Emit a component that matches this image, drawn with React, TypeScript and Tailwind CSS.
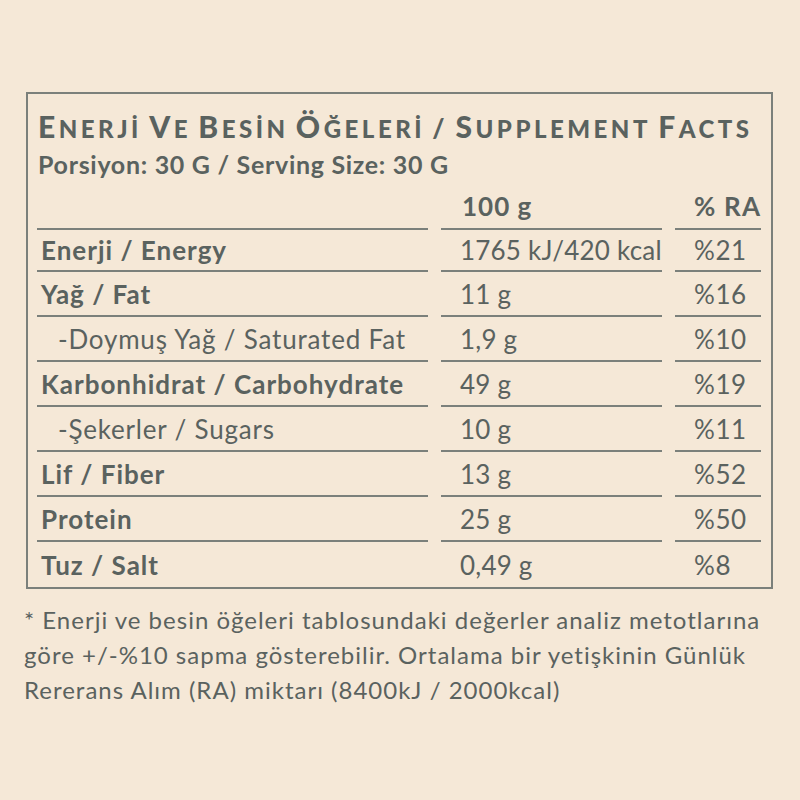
import React from "react";

const rows: { label: string; bold: boolean; v: string; ra: string }[] = [
  { label: "Enerji / Energy", bold: true, v: "1765 kJ/420 kcal", ra: "%21" },
  { label: "Yağ / Fat", bold: true, v: "11 g", ra: "%16" },
  { label: "-Doymuş Yağ / Saturated Fat", bold: false, v: "1,9 g", ra: "%10" },
  { label: "Karbonhidrat / Carbohydrate", bold: true, v: "49 g", ra: "%19" },
  { label: "-Şekerler / Sugars", bold: false, v: "10 g", ra: "%11" },
  { label: "Lif / Fiber", bold: true, v: "13 g", ra: "%52" },
  { label: "Protein", bold: true, v: "25 g", ra: "%50" },
  { label: "Tuz / Salt", bold: true, v: "0,49 g", ra: "%8" },
];

function Word({ first, rest }: { first: string; rest: string }) {
  return (
    <span>
      <span className="text-[30px]">{first}</span>
      <span className="text-[24px]">{rest}</span>
    </span>
  );
}

export default function App() {
  return (
    <div
      className="w-[800px] h-[800px] bg-[#f5e8d7] text-[#5a625f] pt-[92px] pl-[26px]"
      style={{ fontFamily: "Lato, 'Noto Sans', sans-serif" }}
    >
      <div className="w-[747px] border-2 border-[#7b807b] pl-[9px] pr-[10px] pt-[17px]">
        <div className="h-[30px] leading-[30px] font-black whitespace-nowrap tracking-[3.5px] pl-[1px]">
          <Word first="E" rest="NERJİ" /> <Word first="V" rest="E" /> <Word first="B" rest="ESİN" />{" "}
          <Word first="Ö" rest="ĞELERİ" /> <span className="text-[26px]">/</span> <Word first="S" rest="UPPLEMENT" />{" "}
          <Word first="F" rest="ACTS" />
        </div>
        <div className="mt-[11px] h-[25px] leading-[25px] text-[25px] font-bold tracking-[0.7px] whitespace-nowrap pl-[1px]">
          Porsiyon: 30 G / Serving Size: 30 G
        </div>
        <div className="mt-[16px] grid grid-cols-[391px_221px_86px] gap-x-[13px] text-[26px] leading-[26px]">
          <div className="border-b-2 border-[#7b807b] pb-[9px]"></div>
          <div className="border-b-2 border-[#7b807b] pb-[9px] pl-[21px] font-bold tracking-[1px]">100 g</div>
          <div className="border-b-2 border-[#7b807b] pb-[9px] pl-[19px] font-bold tracking-[1.2px] whitespace-nowrap">
            % RA
          </div>
          {rows.map((r, i) => {
            const last = i === rows.length - 1;
            const h = i === 0 ? "h-[42px]" : "h-[45px]";
            const b = last ? "" : "border-b-2 border-[#7b807b]";
            return (
              <React.Fragment key={r.label}>
                <div
                  className={`${h} ${b} flex items-center whitespace-nowrap ${
                    r.bold ? "font-bold pl-[4px] tracking-[1px]" : "pl-[21px] tracking-[0.8px]"
                  }`}
                >
                  {r.label}
                </div>
                <div className={`${h} ${b} flex items-center whitespace-nowrap pl-[19px] tracking-[0.2px]`}>{r.v}</div>
                <div className={`${h} ${b} flex items-center whitespace-nowrap pl-[19px] tracking-[0.6px]`}>{r.ra}</div>
              </React.Fragment>
            );
          })}
        </div>
      </div>
      <div className="mt-[13px] text-[24px] leading-[35px] tracking-[1px] whitespace-nowrap -ml-[2px]">
        * Enerji ve besin öğeleri tablosundaki değerler analiz metotlarına
        <br />
        göre +/-%10 sapma gösterebilir. Ortalama bir yetişkinin Günlük
        <br />
        Rererans Alım (RA) miktarı (8400kJ / 2000kcal)
      </div>
    </div>
  );
}
